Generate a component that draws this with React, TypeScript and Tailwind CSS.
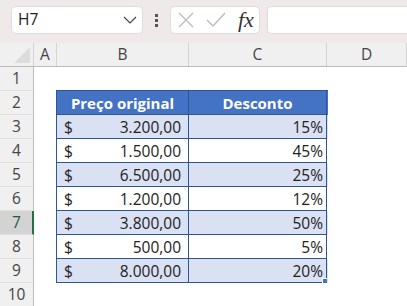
import React from 'react';

const rows = [
  { price: '3.200,00', disc: '15%' },
  { price: '1.500,00', disc: '45%' },
  { price: '6.500,00', disc: '25%' },
  { price: '1.200,00', disc: '12%' },
  { price: '3.800,00', disc: '50%' },
  { price: '500,00', disc: '5%' },
  { price: '8.000,00', disc: '20%' },
];

const App = () => {
  return (
    <div className="w-[407px] h-[306px] overflow-hidden bg-white text-[15.5px] text-[#222]" style={{ fontFamily: '"Open Sans", "Noto Sans", Arial, sans-serif' }}>
      {/* formula bar */}
      <div className="h-[43px] bg-[#efe9ea] flex items-start pt-[6px] pl-[11px]">
        <div className="w-[132px] h-[28px] bg-white border border-[#e2dcdd] rounded-[5px] flex items-center justify-between pl-[6px] pr-[5px]">
          <span className="text-[15.5px] text-[#222]">H7</span>
          <svg width="14" height="8" viewBox="0 0 14 8" fill="none" stroke="#444" strokeWidth="1.2">
            <path d="M1 1 L7 7 L13 1" />
          </svg>
        </div>
        <div className="w-[27px] h-[28px] flex flex-col items-center justify-center gap-[2px]">
          <div className="w-[3px] h-[3px] bg-[#555]" />
          <div className="w-[3px] h-[3px] bg-[#555]" />
          <div className="w-[3px] h-[3px] bg-[#555]" />
        </div>
        <div className="w-[90px] h-[28px] bg-white border border-[#e2dcdd] rounded-[5px] flex items-center pl-[6px] gap-[11px]">
          <svg width="18" height="18" viewBox="0 0 18 18" fill="none" stroke="#bbb" strokeWidth="1.3">
            <path d="M2 2 L16 16 M16 2 L2 16" />
          </svg>
          <svg width="20" height="18" viewBox="0 0 20 18" fill="none" stroke="#bbb" strokeWidth="1.3">
            <path d="M1 9 L7 15 L19 2" />
          </svg>
          <span className="italic text-[22px] text-[#333] leading-none ml-[1px]" style={{ fontFamily: '"Liberation Serif", "Times New Roman", serif' }}>fx</span>
        </div>
        <div className="ml-[7px] flex-1 h-[28px] bg-white border border-[#e2dcdd] border-r-0 rounded-l-[5px]" />
      </div>

      {/* column headers */}
      <div className="flex h-[24px] bg-[#f0f0f0] border-b border-[#bdbdbd] text-[#444]">
        <div className="w-[34px] border-r border-[#d4d4d4] flex items-end justify-end pr-[3px] pb-[3px]">
          <svg width="16" height="16" viewBox="0 0 16 16">
            <polygon points="16,0 16,16 0,16" fill="#dcdcdc" />
          </svg>
        </div>
        <div className="w-[23px] border-r border-[#d4d4d4] flex items-center justify-center">A</div>
        <div className="w-[132px] border-r border-[#d4d4d4] flex items-center justify-center">B</div>
        <div className="w-[138px] border-r border-[#d4d4d4] flex items-center justify-center">C</div>
        <div className="w-[80px] border-r border-[#d4d4d4] flex items-center justify-center">D</div>
        <div className="flex-1" />
      </div>

      <div className="flex">
        {/* row headers */}
        <div className="w-[34px] flex flex-col bg-[#f0f0f0] text-[#444]">
          {[1, 2, 3, 4, 5, 6, 7, 8, 9, 10].map((n) => (
            <div
              key={n}
              className={
                n === 7
                  ? 'h-[24px] border-b border-[#e0e0e0] border-r-2 border-r-[#217346] bg-[#d3d3d3] text-[#1c5e3a] flex items-center justify-center pl-[1px]'
                  : 'h-[24px] border-b border-[#e0e0e0] border-r border-r-[#bdbdbd] flex items-center justify-center'
              }
            >
              {n}
            </div>
          ))}
        </div>

        {/* cells */}
        <div className="flex-1 flex flex-col">
          <div className="h-[23px]" />
          <div className="ml-[22px] w-[272px] border-t border-l border-[#2f5597]">
            <div className="flex h-[24px] bg-[#4472c4] text-white font-bold text-[15px]">
              <div className="w-[132px] border-r border-b border-[#2f5597] flex items-center justify-center pt-[1px]">Preço original</div>
              <div className="w-[138px] border-r border-b border-[#2f5597] flex items-center justify-center pt-[1px]">Desconto</div>
            </div>
            {rows.map((r, i) => (
              <div key={i} className={i % 2 === 0 ? 'flex h-[24px] bg-[#d9e1f2]' : 'flex h-[24px] bg-white'}>
                <div className="w-[132px] border-r border-b border-[#2f5597] flex items-center justify-between pl-[7px] pr-[7px] pt-[2px]">
                  <span>$</span>
                  <span>{r.price}</span>
                </div>
                <div className="relative w-[138px] border-r border-b border-[#2f5597] flex items-center justify-end pr-[3px] pt-[2px]">
                  <span>{r.disc}</span>
                  {i === rows.length - 1 && (
                    <div className="absolute right-[-1px] bottom-[-1px] w-[5px] h-[5px] bg-[#4472c4] border-l border-t border-white" />
                  )}
                </div>
              </div>
            ))}
          </div>
        </div>
      </div>
    </div>
  );
};

export default App;
